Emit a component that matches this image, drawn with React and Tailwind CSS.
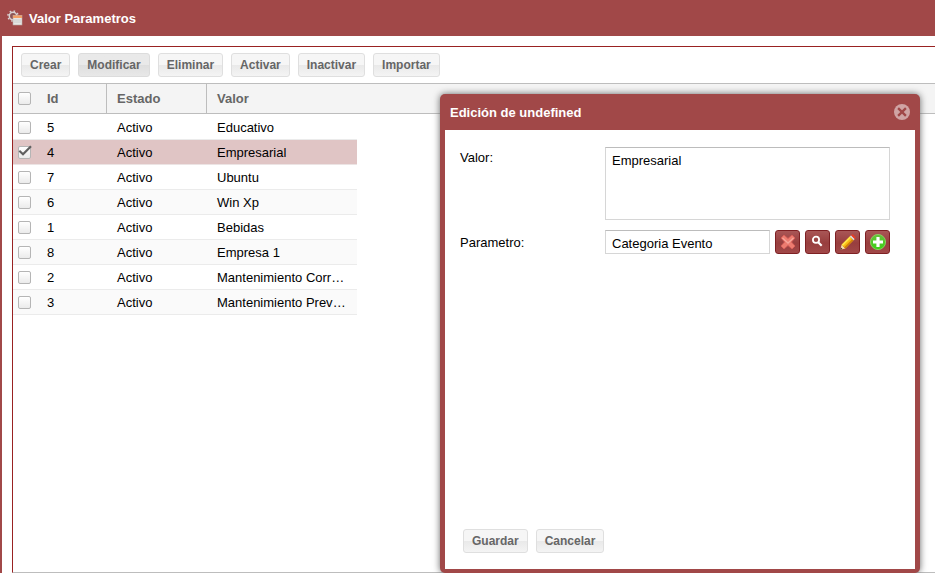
import React from 'react';

const ROWS = [
  { id: 5, estado: 'Activo', valor: 'Educativo' },
  { id: 4, estado: 'Activo', valor: 'Empresarial', selected: true },
  { id: 7, estado: 'Activo', valor: 'Ubuntu' },
  { id: 6, estado: 'Activo', valor: 'Win Xp' },
  { id: 1, estado: 'Activo', valor: 'Bebidas' },
  { id: 8, estado: 'Activo', valor: 'Empresa 1' },
  { id: 2, estado: 'Activo', valor: 'Mantenimiento Correctivo' },
  { id: 3, estado: 'Activo', valor: 'Mantenimiento Preventivo' },
];

const ACTIONS = ['Crear', 'Modificar', 'Eliminar', 'Activar', 'Inactivar', 'Importar'];

function GearWindowIcon() {
  return (
    <svg width="16" height="16" viewBox="0 0 16 16" aria-hidden="true">
      <circle cx="6" cy="6" r="3.7" fill="#8d5555" stroke="#d9d2d2" strokeWidth="1.5" />
      <circle cx="6" cy="6" r="5.1" fill="none" stroke="#d9d2d2" strokeWidth="1.5" strokeDasharray="1.6 2.4" />
      <rect x="6" y="5.5" width="9" height="9.5" fill="#e6e6e4" stroke="#b9a7a2" strokeWidth=".6" />
      <rect x="6" y="5.5" width="9" height="2.5" fill="#f3a268" />
      <path d="M7 10h7M7 12h7" stroke="#c4c4c4" strokeWidth=".8" />
    </svg>
  );
}

function CloseIcon() {
  return (
    <svg width="16" height="16" viewBox="0 0 16 16" aria-hidden="true">
      <circle cx="8" cy="8" r="8" fill="#d0a4a4" />
      <path d="M4.1 4.1l7.8 7.8M11.9 4.1l-7.8 7.8" stroke="#a04747" strokeWidth="2.3" />
    </svg>
  );
}

function DeleteIcon() {
  return (
    <svg width="16" height="16" viewBox="0 0 16 16" aria-hidden="true">
      <path
        d="M1 4L4 1l4 3.6L12 1l3 3-3.6 4 3.6 4-3 3-4-3.6L4 15l-3-3 3.6-4z"
        fill="#ec7c70"
        stroke="#d8605a"
        strokeWidth="1"
        strokeLinejoin="round"
      />
      <path d="M2.5 4L8 9l5.5-5" fill="none" stroke="#f5a69b" strokeWidth="1.4" />
    </svg>
  );
}

function SearchIcon() {
  return (
    <svg width="16" height="16" viewBox="0 0 16 16" aria-hidden="true">
      <circle cx="6" cy="5.8" r="3.1" fill="none" stroke="#fff" strokeWidth="1.8" />
      <path d="M8.2 8.2l3.5 3.5" stroke="#fff" strokeWidth="2.1" />
    </svg>
  );
}

function PencilIcon() {
  return (
    <svg width="16" height="16" viewBox="0 0 16 16" aria-hidden="true">
      <path d="M.3 15.7l1.3-5 3.7 3.7z" fill="#f7dfac" />
      <path d="M.3 15.7l.6-2.2 1.6 1.6z" fill="#3b2c20" />
      <path d="M1.6 10.7L9.8 2.5 13.5 6.2l-8.2 8.2z" fill="#f8bd14" />
      <path d="M1.6 10.7L9.8 2.5l1.2 1.2L2.8 11.9z" fill="#ffe74a" />
      <path d="M4.2 13.3l8.2-8.2 1.1 1.1-8.2 8.2z" fill="#cf7f0c" />
      <path d="M9.8 2.5l1.3-1.3 3.7 3.7-1.3 1.3z" fill="#d6d9dc" />
      <path d="M11.1 1.2l.5-.5q.9-.7 1.7 0l2 2q.7.8 0 1.7l-.5.5z" fill="#e93d25" />
    </svg>
  );
}

function AddIcon() {
  return (
    <svg width="16" height="16" viewBox="0 0 16 16" aria-hidden="true">
      <defs>
        <linearGradient id="addFill" x1="0" y1="0" x2="0" y2="1">
          <stop offset="0" stopColor="#67c13c" />
          <stop offset="1" stopColor="#3cd015" />
        </linearGradient>
      </defs>
      <circle cx="8" cy="8" r="7.6" fill="url(#addFill)" stroke="#8edc6c" strokeWidth=".8" />
      <path d="M6.4 3h3.2v3.4H13v3.2H9.6V13H6.4V9.6H3V6.4h3.4z" fill="#fff" />
    </svg>
  );
}

function TextButton({ children, active }) {
  return (
    <button
      type="button"
      className={
        'h-6 rounded-[3px] border px-2 pb-px text-[12px] leading-5 font-bold text-[#666] ' +
        (active
          ? 'border-[#dcdcdc] bg-linear-to-b from-[#e9e9e9] from-50% via-[#dedede] via-50% to-[#e8e8e8]'
          : 'border-[#dfdfdf] bg-linear-to-b from-[#f6f6f6] from-50% via-[#e9e9e9] via-50% to-[#f4f4f4]')
      }
    >
      {children}
    </button>
  );
}

function IconButton({ label, children }) {
  return (
    <button
      type="button"
      aria-label={label}
      className="flex h-6 w-[25px] shrink-0 items-center justify-center rounded-[3px] border border-[#7e2023] bg-linear-to-b from-[#a95656] from-0% via-[#983e3e] via-55% to-[#a14848]"
    >
      {children}
    </button>
  );
}

function Check({ label, checked }) {
  return (
    <label className="relative ml-[5px] block size-[13px]">
      <input
        type="checkbox"
        aria-label={label}
        defaultChecked={checked}
        className="peer block size-[13px] appearance-none rounded-[2px] border border-[#b5b5b5] bg-linear-to-b from-white to-[#ebebeb]"
      />
      <svg
        className="pointer-events-none absolute -top-px left-0 hidden peer-checked:block"
        width="14"
        height="13"
        viewBox="0 0 14 13"
        aria-hidden="true"
      >
        <path d="M1.3 5.8L5 9.3 13 1.2" fill="none" stroke="#606060" strokeWidth="2.2" />
      </svg>
    </label>
  );
}

function ParameterTable() {
  return (
    <table className="w-full table-fixed border-collapse text-left">
      <colgroup>
        <col className="w-6" />
        <col className="w-[70px]" />
        <col className="w-[100px]" />
        <col className="w-[150px]" />
        <col />
      </colgroup>
      <thead className="bg-[#f4f4f4] text-[#666] shadow-[inset_0_1px_#bdbdbd,inset_0_-1px_#bdbdbd]">
        <tr className="h-[31px]">
          <th className="p-0"><Check label="Seleccionar todo" /></th>
          <th className="py-0 pr-0 pl-[10px] shadow-[inset_-1px_0_#bdbdbd]">Id</th>
          <th className="py-0 pr-0 pl-[10px] shadow-[inset_-1px_0_#bdbdbd]">Estado</th>
          <th className="py-0 pr-0 pl-[10px]">Valor</th>
          <td />
        </tr>
      </thead>
      <tbody className="before:block before:h-px before:content-['']">
        {ROWS.map((row, i) => {
          const tone = row.selected
            ? 'bg-[#e0c5c5] shadow-[inset_0_-1px_#ece4e4]'
            : i % 2
              ? 'bg-[#fafafa] shadow-[inset_0_-1px_#ebebeb]'
              : 'bg-white shadow-[inset_0_-1px_#ebebeb]';
          return (
            <tr key={row.id} className="h-[25px]">
              <td className={'p-0 ' + tone}>
                <Check label={'Seleccionar ' + row.valor} checked={row.selected} />
              </td>
              <td className={'py-0 pr-0 pl-[10px] ' + tone}>{row.id}</td>
              <td className={'py-0 pr-0 pl-[10px] ' + tone}>{row.estado}</td>
              <td className={'truncate py-0 pr-[10px] pl-[10px] ' + tone}>{row.valor}</td>
              <td />
            </tr>
          );
        })}
      </tbody>
    </table>
  );
}

function EditDialog() {
  return (
    <section
      role="dialog"
      aria-labelledby="dialog-title"
      className="absolute top-[94px] bottom-0 left-[438px] flex w-[480px] flex-col rounded-[5px] bg-[#a14848] px-[5px] pb-1 shadow-[0_0_7px_#666]"
    >
      <header className="flex h-9 shrink-0 items-center justify-between pr-[5px] pl-[5px] text-white">
        <h2 id="dialog-title" className="pt-px font-bold">Edición de undefined</h2>
        <button type="button" aria-label="Cerrar"><CloseIcon /></button>
      </header>
      <form className="flex flex-1 flex-col bg-white pt-[17px] pr-[25px] pb-4 pl-[15px]">
        <div className="flex items-start">
          <label htmlFor="valor" className="w-[145px] shrink-0 pt-[3px]">Valor:</label>
          <textarea
            id="valor"
            defaultValue="Empresarial"
            className="block h-[73px] min-w-0 flex-1 resize-none border border-[#d6d6d6] border-t-[#bcbcbc] px-[6px] py-[5px] outline-none"
          />
        </div>
        <div className="mt-[10px] flex items-center">
          <label htmlFor="parametro" className="w-[145px] shrink-0 pt-px">Parametro:</label>
          <div className="flex min-w-0 flex-1 gap-[5px]">
            <input
              id="parametro"
              type="text"
              defaultValue="Categoria Evento"
              className="h-6 min-w-0 flex-1 border border-[#d6d6d6] border-t-[#bcbcbc] px-[6px] pt-[2px] outline-none"
            />
            <IconButton label="Quitar"><DeleteIcon /></IconButton>
            <IconButton label="Buscar"><SearchIcon /></IconButton>
            <IconButton label="Editar"><PencilIcon /></IconButton>
            <IconButton label="Agregar"><AddIcon /></IconButton>
          </div>
        </div>
        <footer className="mt-auto flex gap-2 pl-[3px]">
          <TextButton>Guardar</TextButton>
          <TextButton>Cancelar</TextButton>
        </footer>
      </form>
    </section>
  );
}

export default function App() {
  return (
    <main className="relative flex min-h-screen flex-col overflow-hidden border-l-2 border-[#a14848] bg-white font-['Liberation_Sans',Arial,sans-serif] text-[13px] leading-4 text-black">
      <header className="flex h-9 items-center gap-[6px] bg-[#a14848] pl-[5px] text-white">
        <GearWindowIcon />
        <h1 className="pt-px font-bold">Valor Parametros</h1>
      </header>
      <div className="mt-[10px] ml-[10px] flex flex-1 flex-col border-t border-b border-l border-[#992222] border-b-[#bdbdbd]">
        <div className="flex gap-2 px-2 py-[6px]">
          {ACTIONS.map((name) => (
            <TextButton key={name} active={name === 'Modificar'}>{name}</TextButton>
          ))}
        </div>
        <ParameterTable />
      </div>
      <EditDialog />
    </main>
  );
}
